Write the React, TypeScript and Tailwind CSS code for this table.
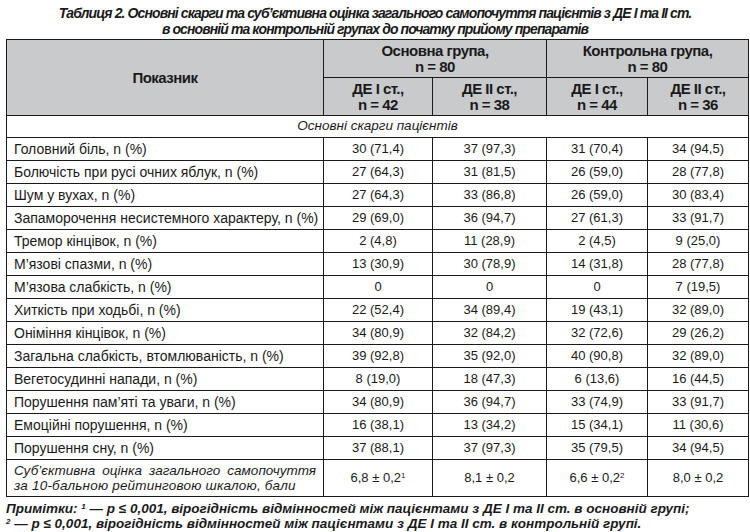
const rows: [string, string, string, string, string][] = [
  ["Головний біль, n (%)", "30 (71,4)", "37 (97,3)", "31 (70,4)", "34 (94,5)"],
  ["Болючість при русі очних яблук, n (%)", "27 (64,3)", "31 (81,5)", "26 (59,0)", "28 (77,8)"],
  ["Шум у вухах, n (%)", "27 (64,3)", "33 (86,8)", "26 (59,0)", "30 (83,4)"],
  ["Запаморочення несистемного характеру, n (%)", "29 (69,0)", "36 (94,7)", "27 (61,3)", "33 (91,7)"],
  ["Тремор кінцівок, n (%)", "2 (4,8)", "11 (28,9)", "2 (4,5)", "9 (25,0)"],
  ["М’язові спазми, n (%)", "13 (30,9)", "30 (78,9)", "14 (31,8)", "28 (77,8)"],
  ["М’язова слабкість, n (%)", "0", "0", "0", "7 (19,5)"],
  ["Хиткість при ходьбі, n (%)", "22 (52,4)", "34 (89,4)", "19 (43,1)", "32 (89,0)"],
  ["Оніміння кінцівок, n (%)", "34 (80,9)", "32 (84,2)", "32 (72,6)", "29 (26,2)"],
  ["Загальна слабкість, втомлюваність, n (%)", "39 (92,8)", "35 (92,0)", "40 (90,8)", "32 (89,0)"],
  ["Вегетосудинні напади, n (%)", "8 (19,0)", "18 (47,3)", "6 (13,6)", "16 (44,5)"],
  ["Порушення пам’яті та уваги, n (%)", "34 (80,9)", "36 (94,7)", "33 (74,9)", "33 (91,7)"],
  ["Емоційні порушення, n (%)", "16 (38,1)", "13 (34,2)", "15 (34,1)", "11 (30,6)"],
  ["Порушення сну, n (%)", "37 (88,1)", "37 (97,3)", "35 (79,5)", "34 (94,5)"],
];

const cell = "border border-[#1a1a1a] p-0";
const num = cell + " text-center text-[13px]";
const head =
  "border border-[#1a1a1a] bg-[#c9cacc] p-0 font-bold text-center text-[15px] leading-[16px] tracking-[-0.5px]";

export default function App() {
  return (
    <div className="w-[750px] h-[532px] bg-white text-[#1a1a1a] font-['Liberation_Sans',Arial,sans-serif] overflow-hidden">
      <div className="pt-[5px] text-center font-bold italic text-[14px] leading-[16px] tracking-[-0.9px]">
        <p>Таблиця 2. Основні скарги та суб’єктивна оцінка загального самопочуття пацієнтів з ДЕ I та II ст.</p>
        <p>в основній та контрольній групах до початку прийому препаратів</p>
      </div>

      <table className="mt-[2px] ml-[6px] w-[742px] table-fixed border-collapse text-[14px]">
        <colgroup>
          <col className="w-[317px]" />
          <col className="w-[109px]" />
          <col className="w-[114px]" />
          <col className="w-[101px]" />
          <col className="w-[101px]" />
        </colgroup>
        <thead>
          <tr className="h-[38px]">
            <th rowSpan={2} className={head}>Показник</th>
            <th colSpan={2} className={head}>
              Основна група,
              <br />n = 80
            </th>
            <th colSpan={2} className={head}>
              Контрольна група,
              <br />n = 80
            </th>
          </tr>
          <tr className="h-[38px]">
            <th className={head}>
              ДЕ I ст.,
              <br />n = 42
            </th>
            <th className={head}>
              ДЕ II ст.,
              <br />n = 38
            </th>
            <th className={head}>
              ДЕ I ст.,
              <br />n = 44
            </th>
            <th className={head}>
              ДЕ II ст.,
              <br />n = 36
            </th>
          </tr>
        </thead>
        <tbody>
          <tr className="h-[22px]">
            <td colSpan={5} className={cell + " text-center italic text-[13.5px]"}>
              Основні скарги пацієнтів
            </td>
          </tr>
          {rows.map((r, i) => (
            <tr key={i} className="h-[23px]">
              <td className={cell + " pl-[7px]"}>{r[0]}</td>
              {r.slice(1).map((v, j) => (
                <td key={j} className={num}>
                  {v}
                </td>
              ))}
            </tr>
          ))}
          <tr className="h-[37px]">
            <td className={cell + " px-[7px] italic text-[13.5px] leading-[15px]"}>
              <div className="whitespace-nowrap text-justify [text-align-last:justify]">
                Суб’єктивна оцінка загального самопочуття
              </div>
              <div className="whitespace-nowrap tracking-[0.2px]">за 10-бальною рейтинговою шкалою, бали</div>
            </td>
            <td className={num}>
              6,8 ± 0,2<sup className="text-[8px]">1</sup>
            </td>
            <td className={num}>8,1 ± 0,2</td>
            <td className={num}>
              6,6 ± 0,2<sup className="text-[8px]">2</sup>
            </td>
            <td className={num}>8,0 ± 0,2</td>
          </tr>
        </tbody>
      </table>

      <div className="mt-[4px] pl-[6px] font-bold italic text-[13.5px] leading-[15px]">
        <p>
          Примітки: <sup className="text-[8px]">1</sup> — p ≤ 0,001, вірогідність відмінностей між пацієнтами з ДЕ I та II ст. в основній групі;
        </p>
        <p>
          <sup className="text-[8px]">2</sup> — p ≤ 0,001, вірогідність відмінностей між пацієнтами з ДЕ I та II ст. в контрольній групі.
        </p>
      </div>
    </div>
  );
}
